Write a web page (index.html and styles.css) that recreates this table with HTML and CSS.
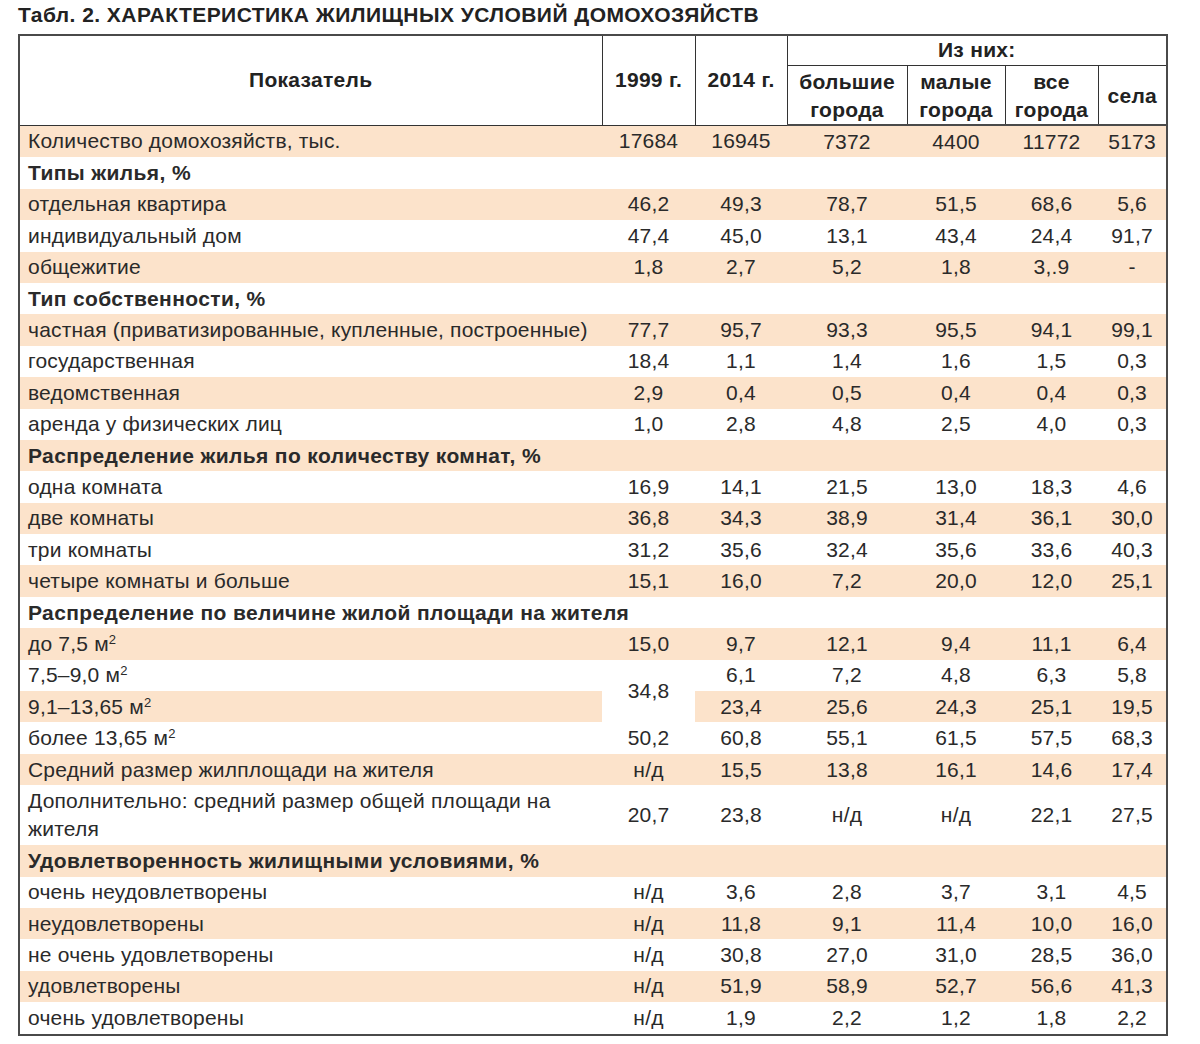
FILE: index.html
```html
<!DOCTYPE html>
<html lang="ru">
<head>
<meta charset="utf-8">
<title>Табл. 2</title>
<link rel="stylesheet" href="styles.css">
</head>
<body>
<h1 class="title">Табл. 2. ХАРАКТЕРИСТИКА ЖИЛИЩНЫХ УСЛОВИЙ ДОМОХОЗЯЙСТВ</h1>
<table class="tbl">
  <colgroup>
    <col class="c-name"><col class="c-y1"><col class="c-y2"><col class="c-big"><col class="c-small"><col class="c-all"><col class="c-sela">
  </colgroup>
  <thead>
    <tr class="h1">
      <th rowspan="2" class="hname">Показатель</th>
      <th rowspan="2">1999 г.</th>
      <th rowspan="2">2014 г.</th>
      <th colspan="4" class="hgroup">Из них:</th>
    </tr>
    <tr class="h2">
      <th>большие<br>города</th>
      <th>малые<br>города</th>
      <th>все<br>города</th>
      <th>села</th>
    </tr>
  </thead>
  <tbody>
    <tr class="s"><td class="n">Количество домохозяйств, тыс.</td><td>17684</td><td>16945</td><td>7372</td><td>4400</td><td>11772</td><td>5173</td></tr>
    <tr class="sec"><td colspan="7">Типы жилья, %</td></tr>
    <tr class="s"><td class="n">отдельная квартира</td><td>46,2</td><td>49,3</td><td>78,7</td><td>51,5</td><td>68,6</td><td>5,6</td></tr>
    <tr><td class="n">индивидуальный дом</td><td>47,4</td><td>45,0</td><td>13,1</td><td>43,4</td><td>24,4</td><td>91,7</td></tr>
    <tr class="s"><td class="n">общежитие</td><td>1,8</td><td>2,7</td><td>5,2</td><td>1,8</td><td>3,.9</td><td>-</td></tr>
    <tr class="sec"><td colspan="7">Тип собственности, %</td></tr>
    <tr class="s"><td class="n">частная (приватизированные, купленные, построенные)</td><td>77,7</td><td>95,7</td><td>93,3</td><td>95,5</td><td>94,1</td><td>99,1</td></tr>
    <tr><td class="n">государственная</td><td>18,4</td><td>1,1</td><td>1,4</td><td>1,6</td><td>1,5</td><td>0,3</td></tr>
    <tr class="s"><td class="n">ведомственная</td><td>2,9</td><td>0,4</td><td>0,5</td><td>0,4</td><td>0,4</td><td>0,3</td></tr>
    <tr><td class="n">аренда у физических лиц</td><td>1,0</td><td>2,8</td><td>4,8</td><td>2,5</td><td>4,0</td><td>0,3</td></tr>
    <tr class="s sec"><td colspan="7">Распределение жилья по количеству комнат, %</td></tr>
    <tr><td class="n">одна комната</td><td>16,9</td><td>14,1</td><td>21,5</td><td>13,0</td><td>18,3</td><td>4,6</td></tr>
    <tr class="s"><td class="n">две комнаты</td><td>36,8</td><td>34,3</td><td>38,9</td><td>31,4</td><td>36,1</td><td>30,0</td></tr>
    <tr><td class="n">три комнаты</td><td>31,2</td><td>35,6</td><td>32,4</td><td>35,6</td><td>33,6</td><td>40,3</td></tr>
    <tr class="s"><td class="n">четыре комнаты и больше</td><td>15,1</td><td>16,0</td><td>7,2</td><td>20,0</td><td>12,0</td><td>25,1</td></tr>
    <tr class="sec"><td colspan="7">Распределение по величине жилой площади на жителя</td></tr>
    <tr class="s"><td class="n">до 7,5 м<sup>2</sup></td><td>15,0</td><td>9,7</td><td>12,1</td><td>9,4</td><td>11,1</td><td>6,4</td></tr>
    <tr><td class="n">7,5–9,0 м<sup>2</sup></td><td rowspan="2" class="merged">34,8</td><td>6,1</td><td>7,2</td><td>4,8</td><td>6,3</td><td>5,8</td></tr>
    <tr class="s"><td class="n">9,1–13,65 м<sup>2</sup></td><td>23,4</td><td>25,6</td><td>24,3</td><td>25,1</td><td>19,5</td></tr>
    <tr><td class="n">более 13,65 м<sup>2</sup></td><td>50,2</td><td>60,8</td><td>55,1</td><td>61,5</td><td>57,5</td><td>68,3</td></tr>
    <tr class="s"><td class="n">Средний размер жилплощади на жителя</td><td>н/д</td><td>15,5</td><td>13,8</td><td>16,1</td><td>14,6</td><td>17,4</td></tr>
    <tr class="tall"><td class="n">Дополнительно: средний размер общей площади на жителя</td><td>20,7</td><td>23,8</td><td>н/д</td><td>н/д</td><td>22,1</td><td>27,5</td></tr>
    <tr class="s sec"><td colspan="7">Удовлетворенность жилищными условиями, %</td></tr>
    <tr><td class="n">очень неудовлетворены</td><td>н/д</td><td>3,6</td><td>2,8</td><td>3,7</td><td>3,1</td><td>4,5</td></tr>
    <tr class="s"><td class="n">неудовлетворены</td><td>н/д</td><td>11,8</td><td>9,1</td><td>11,4</td><td>10,0</td><td>16,0</td></tr>
    <tr><td class="n">не очень удовлетворены</td><td>н/д</td><td>30,8</td><td>27,0</td><td>31,0</td><td>28,5</td><td>36,0</td></tr>
    <tr class="s"><td class="n">удовлетворены</td><td>н/д</td><td>51,9</td><td>58,9</td><td>52,7</td><td>56,6</td><td>41,3</td></tr>
    <tr><td class="n">очень удовлетворены</td><td>н/д</td><td>1,9</td><td>2,2</td><td>1,2</td><td>1,8</td><td>2,2</td></tr>
  </tbody>
</table>
</body>
</html>
```
FILE: styles.css
```css
html, body {
  margin: 0;
  padding: 0;
  background: #ffffff;
}
body {
  padding: 2px 0 0 18px;
  font-family: "Liberation Sans", Arial, sans-serif;
  color: #222;
}
.title {
  margin: 0 0 7px 0;
  font-size: 21px;
  line-height: 25px;
  font-weight: bold;
  letter-spacing: 0.45px;
  color: #222;
}
.tbl {
  border-collapse: collapse;
  border: 2px solid #4a4a4a;
  width: 1149px;
  table-layout: fixed;
  font-size: 21px;
  letter-spacing: 0.2px;
}
.c-name { width: 583px; }
.c-y1 { width: 93px; }
.c-y2 { width: 92px; }
.c-big { width: 120px; }
.c-small { width: 98px; }
.c-all { width: 93px; }
.c-sela { width: 69px; }

.tbl th {
  border: 1px solid #333;
  font-weight: bold;
  padding: 0;
  line-height: 28px;
  text-align: center;
  vertical-align: middle;
  color: #222;
  letter-spacing: 0.3px;
}
.tbl thead tr:last-child th { border-bottom: 2px solid #4a4a4a; }
.h1 { height: 30px; }
.h2 { height: 60px; }
.h2 th { padding-top: 2px; }

.tbl td {
  padding: 0;
  height: 31.4px;
  line-height: 28px;
  text-align: center;
  vertical-align: middle;
  color: #2a2a2a;
}
.tbl td.n {
  text-align: left;
  padding-left: 8px;
  padding-right: 6px;
}
.tbl tr.s td { background: #fce3cb; }
.tbl tr.s td.merged, .tbl td.merged { background: #ffffff; }
.tbl tr.sec td {
  text-align: left;
  padding-left: 8px;
  font-weight: bold;
  letter-spacing: 0.38px;
}
.tbl tr.tall td { height: 60px; }
sup {
  font-size: 13px;
  line-height: 0;
  vertical-align: 7px;
}
```
